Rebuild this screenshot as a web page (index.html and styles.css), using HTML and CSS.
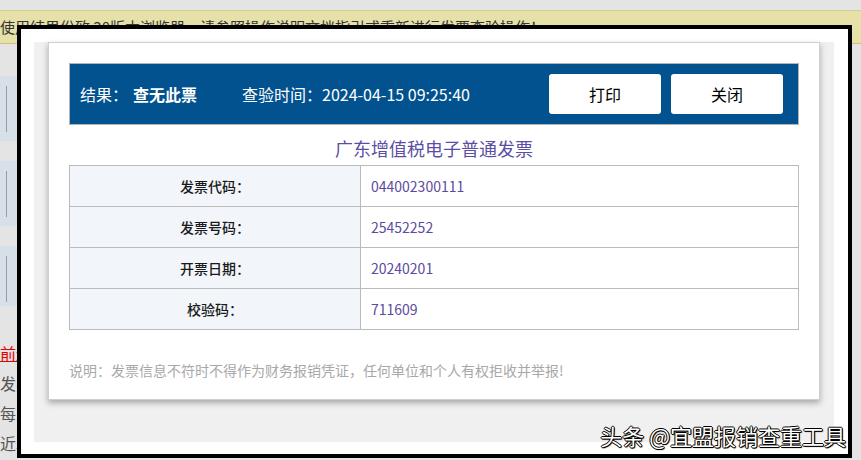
FILE: index.html
```html
<!DOCTYPE html>
<html lang="zh-CN">
<head>
<meta charset="utf-8">
<title>发票查验结果</title>
<link rel="stylesheet" href="styles.css">
</head>
<body>
<div class="page">
  <div class="topstrip"></div>
  <div class="notice">使用结果份致 30版本浏览器，请参照操作说明文档指引或重新进行发票查验操作！</div>
  <div class="side">
    <div class="block"><span class="bar"></span></div>
    <div class="block"><span class="bar"></span></div>
    <div class="block short"><span class="bar"></span></div>
    <div class="links">
      <div class="red">前边说明</div>
      <div>发票查验</div>
      <div>每天查验</div>
      <div>近5年</div>
    </div>
  </div>
</div>

<div class="frame">
  <div class="panel">
    <div class="card">
      <div class="header">
        <div class="result">
          <span>结果：</span><span class="status">查无此票</span>
          <span class="time">查验时间：2024-04-15 09:25:40</span>
        </div>
        <div class="actions">
          <button class="btn">打印</button>
          <button class="btn">关闭</button>
        </div>
      </div>
      <div class="title">广东增值税电子普通发票</div>
      <table class="info">
        <tr><th>发票代码：</th><td>044002300111</td></tr>
        <tr><th>发票号码：</th><td>25452252</td></tr>
        <tr><th>开票日期：</th><td>20240201</td></tr>
        <tr><th>校验码：</th><td>711609</td></tr>
      </table>
      <p class="note">说明：发票信息不符时不得作为财务报销凭证，任何单位和个人有权拒收并举报!</p>
    </div>
  </div>
</div>

<div class="watermark">头条 @宜盟报销查重工具</div>
</body>
</html>
```

FILE: styles.css
```css
html, body {
  margin: 0;
  padding: 0;
}
body {
  width: 861px;
  height: 460px;
  overflow: hidden;
  background: #e4e4e4;
  font-family: "Noto Sans CJK SC", "Noto Sans", "Liberation Sans", sans-serif;
  position: relative;
}
.page {
  display: flex;
  flex-direction: column;
}
.topstrip {
  height: 11px;
  background: #e4e4e4;
}
.notice {
  height: 32px;
  line-height: 32px;
  background: #e6e0a9;
  border-top: 1px solid #d6cc98;
  border-bottom: 1px solid #cfc08a;
  box-sizing: content-box;
  font-size: 15px;
  color: #333;
  white-space: nowrap;
  overflow: hidden;
  margin-top: -1px;
}
.side {
  width: 17px;
  overflow: hidden;
  padding-top: 32px;
  display: flex;
  flex-direction: column;
}
.block {
  height: 65px;
  margin-bottom: 20px;
  background: #d7e0e8;
  padding: 10px 0 0 6px;
  box-sizing: border-box;
}
.block.short {
  height: 60px;
  margin-bottom: 0;
}
.bar {
  display: block;
  width: 1px;
  height: 46px;
  background: #9a9a9a;
}
.links {
  margin-top: 32px;
  font-size: 16px;
  line-height: 30px;
  color: #555;
  white-space: nowrap;
}
.links .red {
  color: #e00000;
  text-decoration: underline;
}

.frame {
  position: absolute;
  left: 17px;
  top: 25px;
  width: 835px;
  height: 433px;
  box-sizing: border-box;
  border: 4px solid #000;
  background: #fff;
  padding: 13px 14px 12px 13px;
}
.panel {
  height: 400px;
  background: #f0f0f0;
  padding-left: 14px;
}
.card {
  width: 772px;
  height: 358px;
  box-sizing: border-box;
  background: #fff;
  border: 1px solid #cfcfcf;
  box-shadow: 0 3px 6px rgba(0, 0, 0, 0.3);
  padding: 20px 20px 0;
}
.header {
  height: 62px;
  box-sizing: border-box;
  border: 1px solid #b3b3b3;
  background: #02528f;
  display: flex;
  align-items: center;
  justify-content: space-between;
  padding: 0 15px 0 10px;
  color: #fff;
  font-size: 16px;
}
.result {
  display: flex;
  align-items: center;
  white-space: nowrap;
}
.status {
  font-weight: bold;
  margin-left: 5px;
}
.time {
  margin-left: 45px;
}
.actions {
  display: flex;
  gap: 10px;
}
.btn {
  width: 112px;
  height: 40px;
  border: none;
  border-radius: 3px;
  background: #fff;
  color: #000;
  font-family: inherit;
  font-size: 16px;
  padding: 0;
}
.title {
  margin: 11px 0 4px;
  line-height: 25px;
  text-align: center;
  font-size: 18px;
  color: #5b4fa5;
}
.info {
  width: 730px;
  border-collapse: collapse;
  font-size: 14px;
}
.info th,
.info td {
  height: 40px;
  border: 1px solid #bbbbbb;
  padding: 0;
}
.info th {
  width: 290px;
  background: #f2f6fa;
  color: #1a1a1a;
  font-weight: 500;
  text-align: center;
}
.info td {
  padding-left: 10px;
  color: #5b4b9e;
  text-align: left;
}
.note {
  margin: 30px 0 0;
  font-size: 14px;
  line-height: 20px;
  color: #a8a8a8;
}

.watermark {
  position: absolute;
  right: 15px;
  top: 421px;
  font-size: 22px;
  line-height: 28px;
  color: #fff;
  white-space: nowrap;
  text-shadow: -1px 0 #000, 1px 0 #000, 0 -1px #000, 0 1px #000, 1px 1px 1px #000;
}
```
